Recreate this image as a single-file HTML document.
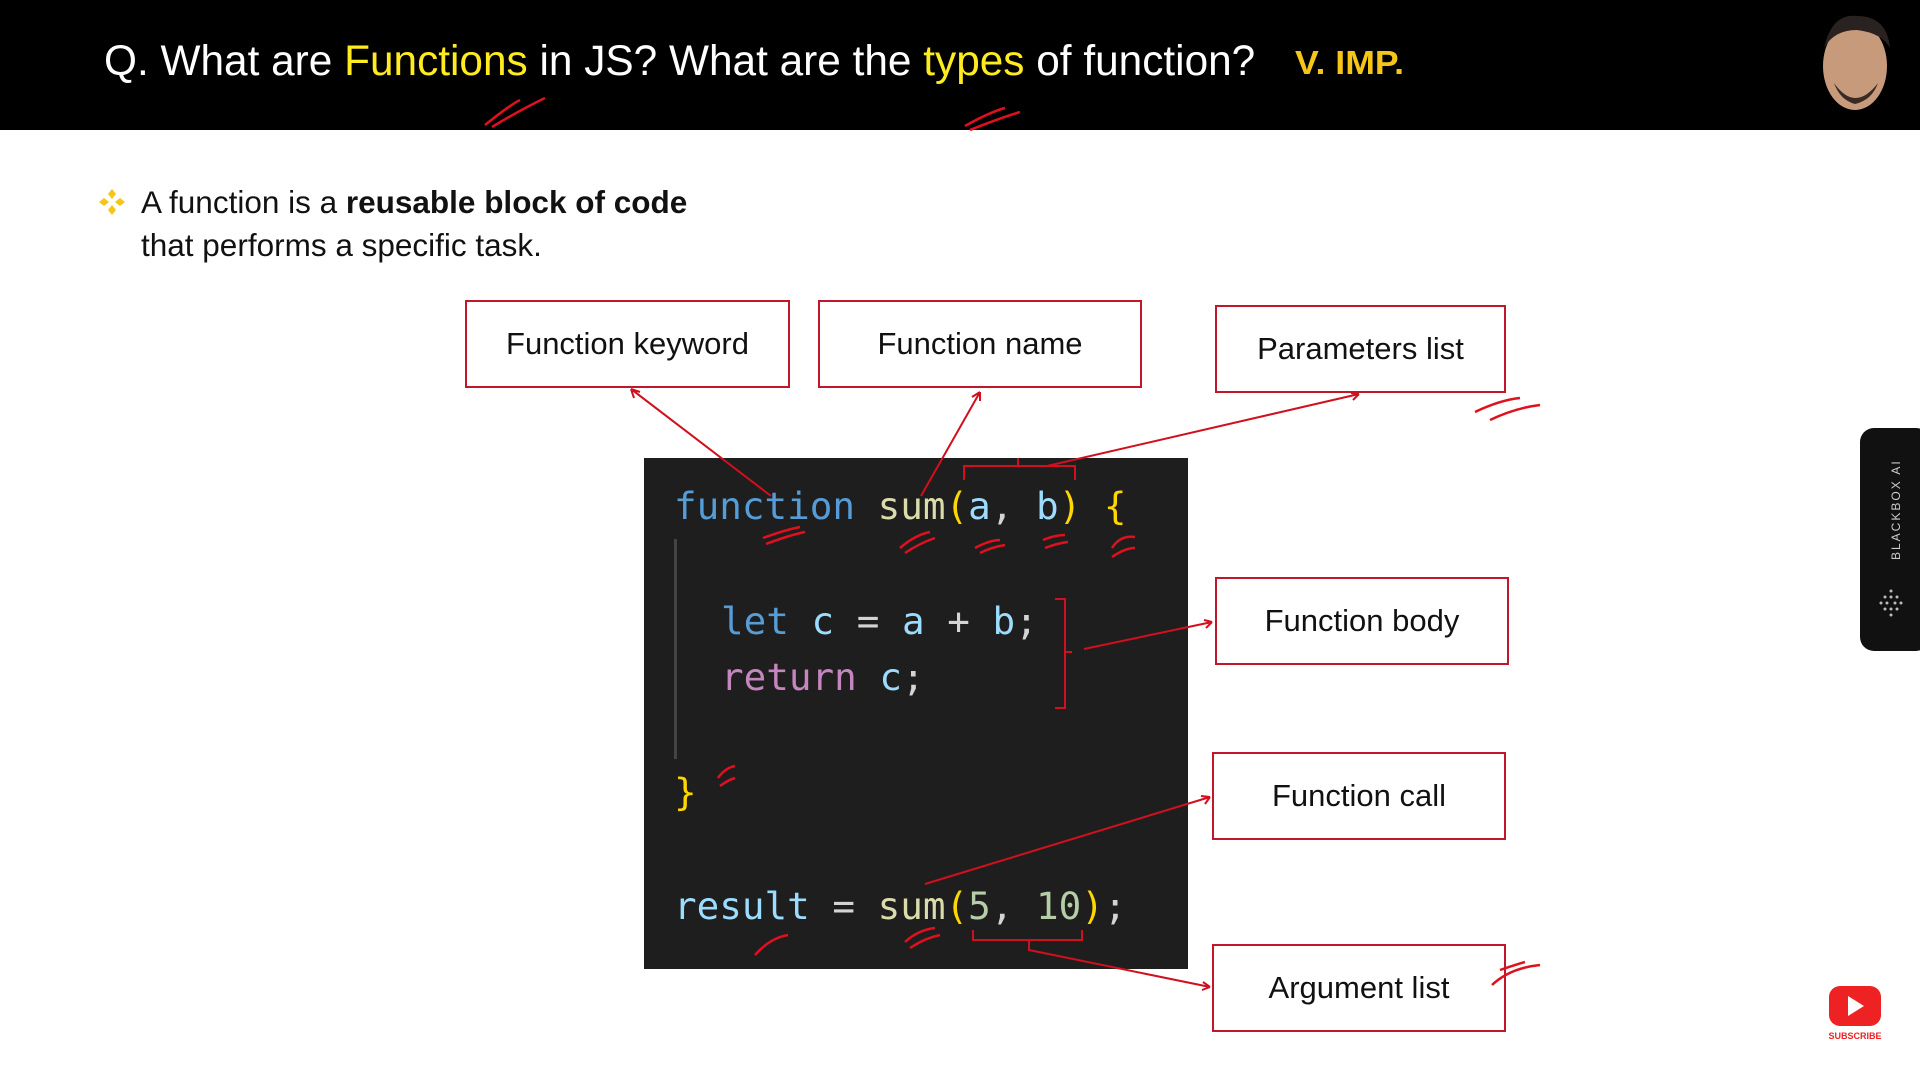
<!DOCTYPE html>
<html><head><meta charset="utf-8"><style>
*{margin:0;padding:0;box-sizing:border-box}
body{width:1920px;height:1080px;background:#fff;position:relative;overflow:hidden;font-family:"Liberation Sans",sans-serif}
.hdr{position:absolute;left:0;top:0;width:1920px;height:130px;background:#000}
.title{position:absolute;left:104px;top:37px;font-size:43px;color:#fff;white-space:nowrap;transform:scaleX(0.985);transform-origin:left center}
.y{color:#ffeb1f}
.vimp{position:absolute;left:1295px;top:44px;font-size:33px;font-weight:bold;color:#f5c518;transform:scaleX(1.08);transform-origin:left}
.txt{position:absolute;left:141px;font-size:31.5px;color:#111;white-space:nowrap}
.box{position:absolute;border:2px solid #c0182a;background:#fff;display:flex;align-items:center;justify-content:center;font-size:31px;color:#111}
.code{position:absolute;left:644px;top:458px;width:544px;height:511px;background:#1e1e1e}
.ln{position:absolute;font-family:"DejaVu Sans Mono","Liberation Mono",monospace;font-size:37.6px;white-space:pre;line-height:40px}
.k{color:#569cd6}.f{color:#dcdcaa}.p{color:#ffd700}.v{color:#9cdcfe}.r{color:#c586c0}.n{color:#b5cea8}.w{color:#d4d4d4}
</style></head><body>
<div class="hdr"></div>
<div class="title">Q. What are <span class="y">Functions</span> in JS? What are the <span class="y">types</span> of function?</div>
<div class="vimp">V. IMP.</div>
<svg style="position:absolute;left:1812px;top:8px" width="86" height="110"><ellipse cx="43" cy="58" rx="32" ry="44" fill="#c79a7c"/><path d="M12 40 Q20 5 45 8 Q75 8 78 40 Q70 25 45 22 Q22 22 12 40Z" fill="#2a2220"/><path d="M22 75 Q43 105 66 75 Q60 92 43 96 Q28 92 22 75Z" fill="#3a2a24"/></svg>
<svg style="position:absolute;left:98px;top:188px" width="28" height="28"><g fill="#f5c518"><path d="M14 1 L18 6 L14 11 L10 6Z"/><path d="M14 17 L18 22 L14 27 L10 22Z"/><path d="M1 14 L6 10 L11 14 L6 18Z"/><path d="M17 14 L22 10 L27 14 L22 18Z"/></g></svg>
<div class="txt" style="top:184px">A function is a <b>reusable block of code</b></div>
<div class="txt" style="top:227px">that performs a specific task.</div>
<div class="box" style="left:465px;top:300px;width:325px;height:88px">Function keyword</div>
<div class="box" style="left:818px;top:300px;width:324px;height:88px">Function name</div>
<div class="box" style="left:1215px;top:305px;width:291px;height:88px">Parameters list</div>
<div class="box" style="left:1215px;top:577px;width:294px;height:88px">Function body</div>
<div class="box" style="left:1212px;top:752px;width:294px;height:88px">Function call</div>
<div class="box" style="left:1212px;top:944px;width:294px;height:88px">Argument list</div>
<div class="code">
<div style="position:absolute;left:30px;top:81px;width:3px;height:220px;background:#444"></div>
<div class="ln" style="left:30px;top:28px"><span class="k">function</span> <span class="f">sum</span><span class="p">(</span><span class="v">a</span><span class="w">,</span> <span class="v">b</span><span class="p">)</span> <span class="p">{</span></div>
<div class="ln" style="left:77px;top:143px"><span class="k">let</span> <span class="v">c</span> <span class="w">=</span> <span class="v">a</span> <span class="w">+</span> <span class="v">b</span><span class="w">;</span></div>
<div class="ln" style="left:77px;top:199px"><span class="r">return</span> <span class="v">c</span><span class="w">;</span></div>
<div class="ln" style="left:30px;top:314px"><span class="p">}</span></div>
<div class="ln" style="left:30px;top:428px"><span class="v">result</span> <span class="w">=</span> <span class="f">sum</span><span class="p">(</span><span class="n">5</span><span class="w">,</span> <span class="n">10</span><span class="p">)</span><span class="w">;</span></div>
</div>
<svg style="position:absolute;left:0;top:0" width="1920" height="1080" fill="none" stroke="#d0101e" stroke-width="2">
<path d="M771 496 L631 389 M631 389 l3 9 M631 389 l9 3"/>
<path d="M921 496 L980 392 M980 392 l-8 5 M980 392 l0 9"/>
<path d="M964 480 V466 H1075 V480 M1018 466 V458 M1047 466 L1359 394 M1359 394 l-8 -1 M1359 394 l-6 6"/>
<path d="M1055 599 H1065 V708 H1055 M1065 652 H1072 M1084 649 L1212 622 M1212 622 l-8 -2 M1212 622 l-6 6"/>
<path d="M925 884 L1210 797 M1210 797 l-9 -1 M1210 797 l-5 7"/>
<path d="M973 930 V940 H1082 V930 M1029 940 V950 L1210 987 M1210 987 l-7 -5 M1210 987 l-8 3"/>
<g stroke="#e0101e" stroke-width="2.5">
<path d="M485 125 Q510 105 520 100 M492 127 Q520 110 545 98"/>
<path d="M965 126 Q990 112 1005 108 M970 130 Q1000 118 1020 112"/>
<path d="M1475 412 Q1500 400 1520 398 M1490 420 Q1515 408 1540 405"/>
<path d="M763 538 Q785 530 800 527 M766 544 Q790 535 805 532"/>
<path d="M900 548 Q915 535 930 532 M905 553 Q920 543 935 538"/>
<path d="M975 548 Q990 540 1000 540 M980 553 Q992 547 1005 545"/>
<path d="M1043 540 Q1055 535 1065 535 M1045 548 Q1058 543 1068 542"/>
<path d="M1112 548 Q1120 535 1135 537 M1112 557 Q1125 548 1135 548"/>
<path d="M718 778 Q725 768 735 766 M720 786 Q728 780 735 778"/>
<path d="M755 955 Q770 938 788 935"/>
<path d="M905 942 Q918 930 935 928 M910 948 Q925 938 940 935"/>
<path d="M1492 985 Q1510 968 1540 965 M1500 970 Q1515 965 1525 962"/>
</g>
</svg>
<div style="position:absolute;left:1860px;top:428px;width:70px;height:223px;background:#111;border-radius:14px"></div>
<div style="position:absolute;left:1889px;top:560px;transform:rotate(-90deg);transform-origin:left top;color:#ccc;font-size:12px;letter-spacing:2px;white-space:nowrap">BLACKBOX AI</div>
<svg style="position:absolute;left:1878px;top:588px" width="26" height="30"><g fill="#bbb"><circle cx="13" cy="3" r="1.5"/><circle cx="7" cy="9" r="1.5"/><circle cx="13" cy="9" r="1.5"/><circle cx="19" cy="9" r="1.5"/><circle cx="3" cy="15" r="1.5"/><circle cx="9" cy="15" r="1.5"/><circle cx="17" cy="15" r="1.5"/><circle cx="23" cy="15" r="1.5"/><circle cx="7" cy="21" r="1.5"/><circle cx="13" cy="21" r="1.5"/><circle cx="19" cy="21" r="1.5"/><circle cx="13" cy="27" r="1.5"/></g></svg>
<svg style="position:absolute;left:1826px;top:986px" width="58" height="56"><rect x="3" y="0" width="52" height="40" rx="11" fill="#ee2222"/><path d="M22 10 L38 20 L22 30Z" fill="#fff"/><text x="29" y="53" font-size="9" font-weight="bold" fill="#ee2222" text-anchor="middle" font-family="Liberation Sans">SUBSCRIBE</text></svg>
</body></html>
